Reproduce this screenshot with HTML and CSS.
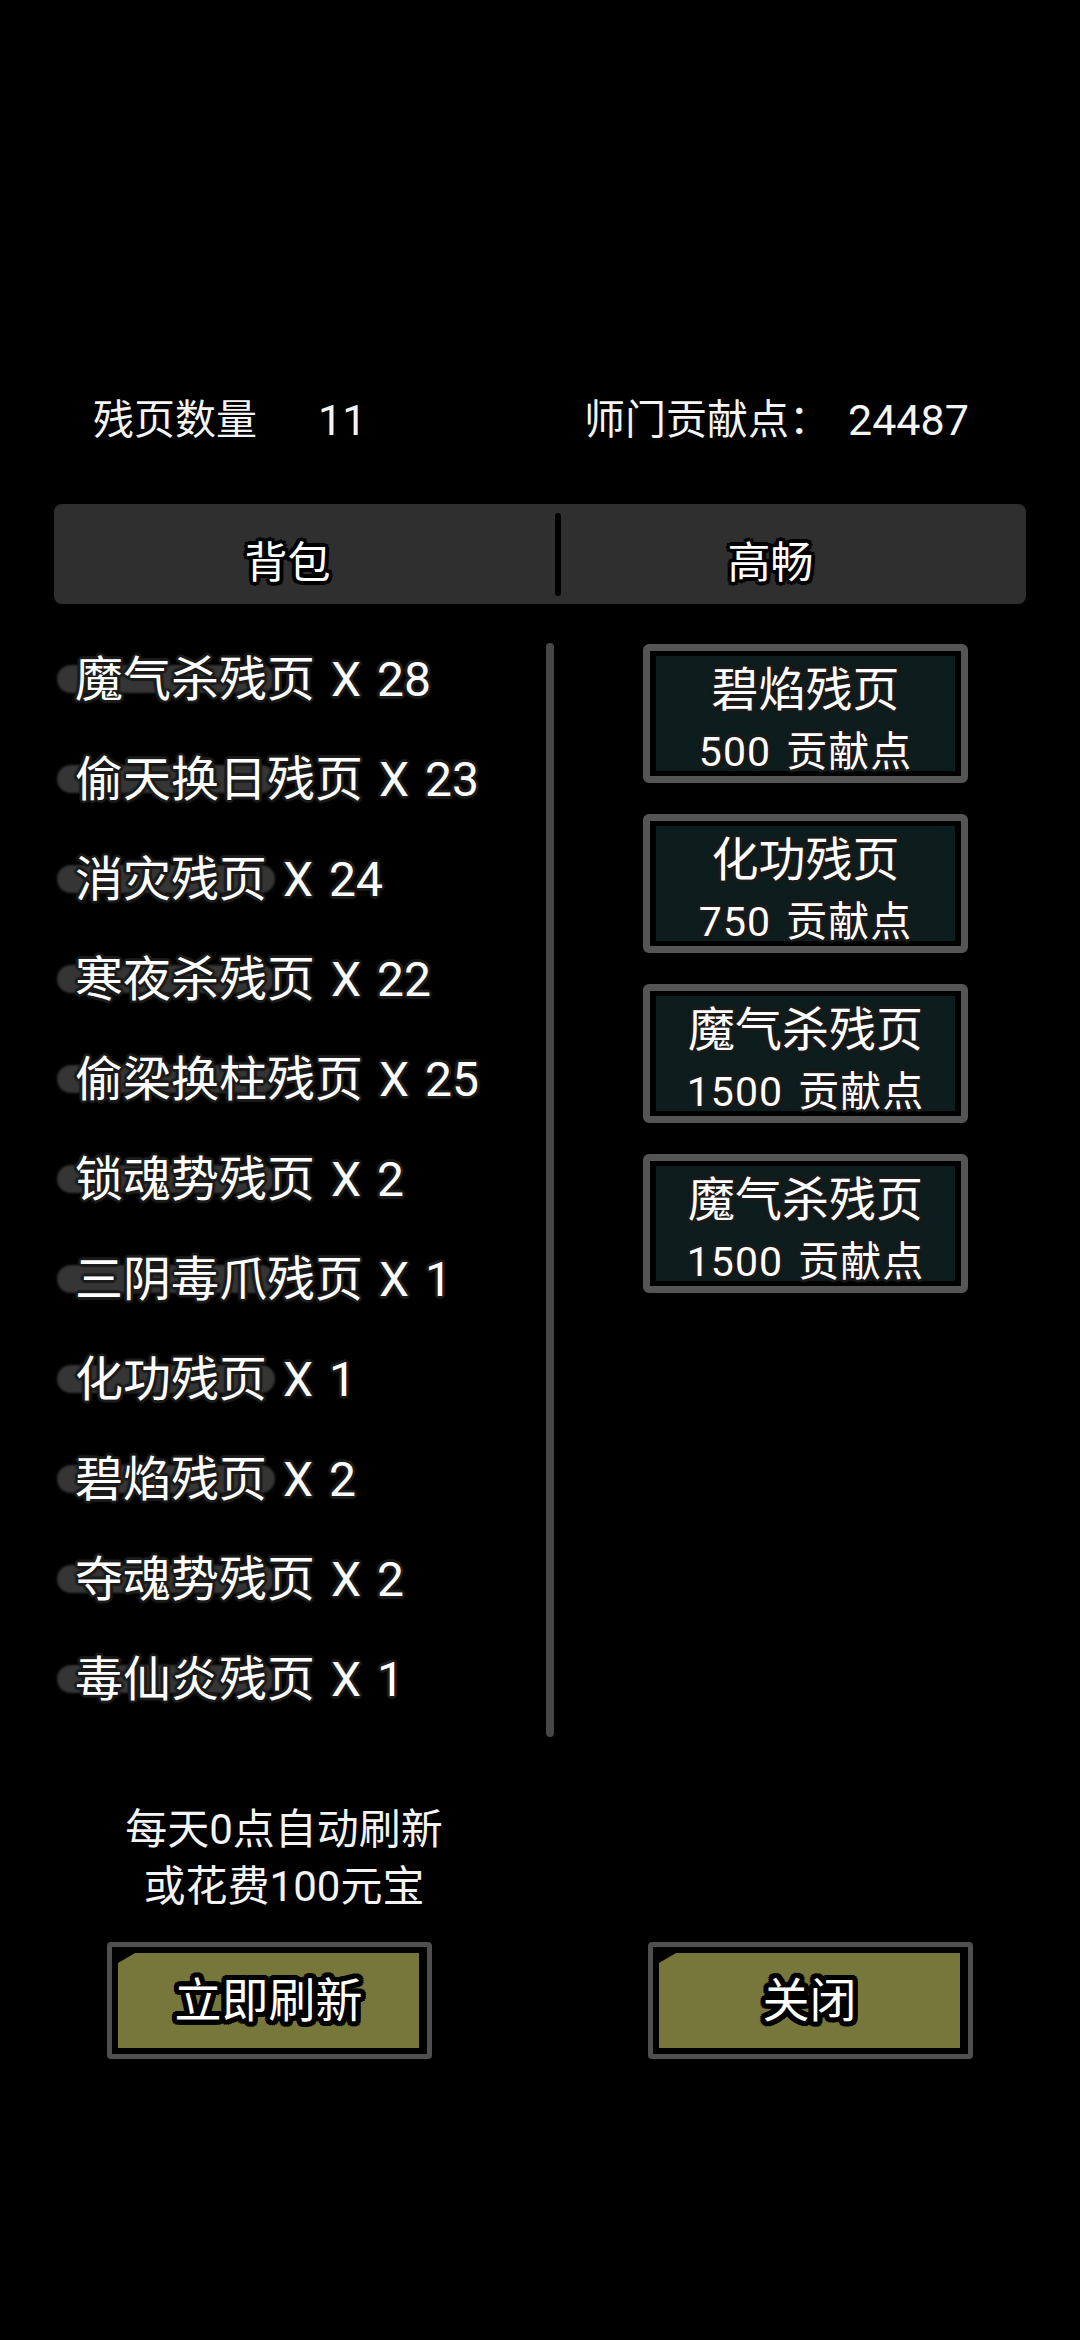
FILE: index.html
```html
<!DOCTYPE html>
<html lang="zh">
<head>
<meta charset="utf-8">
<title>残页兑换</title>
<link rel="stylesheet" href="styles.css">
</head>
<body>
<div class="screen">
  <div class="stats">
    <span class="stat-label">残页数量</span>
    <span class="stat-value">11</span>
    <span class="stat-label">师门贡献点：</span>
    <span class="stat-value">24487</span>
  </div>

  <div class="tabs">
    <div class="tab tab-left"><span class="outlined">背包</span></div>
    <div class="tab-divider"></div>
    <div class="tab tab-right"><span class="outlined">高畅</span></div>
  </div>

  <div class="content">
    <ul class="list">
      <li class="item"><span class="item-text">魔气杀残页 X 28</span></li>
      <li class="item"><span class="item-text">偷天换日残页 X 23</span></li>
      <li class="item"><span class="item-text">消灾残页 X 24</span></li>
      <li class="item"><span class="item-text">寒夜杀残页 X 22</span></li>
      <li class="item"><span class="item-text">偷梁换柱残页 X 25</span></li>
      <li class="item"><span class="item-text">锁魂势残页 X 2</span></li>
      <li class="item"><span class="item-text">三阴毒爪残页 X 1</span></li>
      <li class="item"><span class="item-text">化功残页 X 1</span></li>
      <li class="item"><span class="item-text">碧焰残页 X 2</span></li>
      <li class="item"><span class="item-text">夺魂势残页 X 2</span></li>
      <li class="item"><span class="item-text">毒仙炎残页 X 1</span></li>
    </ul>
    <div class="scrollbar"></div>
    <div class="shop">
      <div class="card">
        <div class="card-inner">
          <div class="card-title">碧焰残页</div>
          <div class="card-sub">500 贡献点</div>
        </div>
      </div>
      <div class="card">
        <div class="card-inner">
          <div class="card-title">化功残页</div>
          <div class="card-sub">750 贡献点</div>
        </div>
      </div>
      <div class="card">
        <div class="card-inner">
          <div class="card-title">魔气杀残页</div>
          <div class="card-sub">1500 贡献点</div>
        </div>
      </div>
      <div class="card">
        <div class="card-inner">
          <div class="card-title">魔气杀残页</div>
          <div class="card-sub">1500 贡献点</div>
        </div>
      </div>
    </div>
  </div>

  <div class="note">每天0点自动刷新<br>或花费100元宝</div>

  <div class="buttons">
    <div class="btn btn-refresh"><div class="btn-inner"><span class="btn-text">立即刷新</span></div></div>
    <div class="btn btn-close"><div class="btn-inner"><span class="btn-text">关闭</span></div></div>
  </div>
</div>
</body>
</html>
```

FILE: styles.css
```css
* {
  box-sizing: border-box;
}

html, body {
  margin: 0;
  padding: 0;
  background: #000;
}

body {
  font-family: Roboto, "Noto Sans CJK SC", sans-serif;
  color: #fff;
}

.screen {
  width: 1080px;
  height: 2340px;
  background: #000;
  overflow: hidden;
}

/* stats row */
.stats {
  display: grid;
  grid-template-columns: 225px 266px 264px auto;
  align-items: center;
  padding-left: 93px;
  margin-top: 395px;
  font-size: 41px;
  line-height: 50px;
  color: #f4f4f4;
}

.stat-value {
  font-size: 43px;
}

/* tabs */
.tabs {
  display: flex;
  align-items: center;
  margin: 59px 54px 0;
  height: 100px;
  background: #2f2f2f;
  border-radius: 8px;
}

.tab {
  display: flex;
  justify-content: center;
  align-items: center;
  height: 100%;
  font-size: 43px;
  padding-top: 10px;
}

.tab-left {
  width: 501px;
  padding-right: 34px;
}

.tab-right {
  flex: 1;
  padding-right: 46px;
}

.tab-divider {
  width: 6px;
  height: 83px;
  background: #000;
  border-radius: 3px;
}

.outlined {
  text-shadow:
    -3px -3px 0 #000, 3px -3px 0 #000, -3px 3px 0 #000, 3px 3px 0 #000,
    0 -4px 0 #000, 0 4px 0 #000, -4px 0 0 #000, 4px 0 0 #000;
}

/* content */
.content {
  display: flex;
  align-items: flex-start;
  margin-top: 26px;
  padding-left: 57px;
}

.list {
  list-style: none;
  margin: 0;
  padding: 0;
  width: 489px;
}

.item {
  position: relative;
  height: 100px;
  display: flex;
  align-items: center;
  padding-left: 18px;
  font-size: 48px;
  line-height: 100px;
  white-space: nowrap;
}

.item::before {
  content: "";
  position: absolute;
  left: 0;
  top: 35px;
  width: 218px;
  height: 28px;
  border-radius: 14px;
  background: #353535;
  filter: blur(1px);
}

.item-text {
  position: relative;
  word-spacing: 4px;
  text-shadow:
    -2px -2px 1px #1c1c1c, 2px -2px 1px #1c1c1c, -2px 2px 1px #1c1c1c, 2px 2px 1px #1c1c1c,
    0 -3px 1px #1c1c1c, 0 3px 1px #1c1c1c, -3px 0 1px #1c1c1c, 3px 0 1px #1c1c1c;
}

.scrollbar {
  width: 8px;
  height: 1094px;
  margin-top: 13px;
  background: #474747;
  border-radius: 4px;
}

.shop {
  display: flex;
  flex-direction: column;
  gap: 31px;
  margin-left: 89px;
  padding-top: 14px;
}

.card {
  width: 325px;
  height: 139px;
  border: 7px solid #555;
  border-radius: 6px;
  background: #000;
  padding: 5px 6px;
}

.card-inner {
  height: 115px;
  background: #0d1c1c;
  text-align: center;
  color: #fff;
  text-shadow:
    -2px -2px 1px #1c1c1c, 2px -2px 1px #1c1c1c, -2px 2px 1px #1c1c1c, 2px 2px 1px #1c1c1c,
    0 -3px 1px #1c1c1c, 0 3px 1px #1c1c1c, -3px 0 1px #1c1c1c, 3px 0 1px #1c1c1c;
}

.card-title {
  font-size: 47px;
  line-height: 56px;
  padding-top: 6px;
  white-space: nowrap;
}

.card-sub {
  font-size: 41px;
  line-height: 40px;
  margin-top: 14px;
  word-spacing: 4px;
  letter-spacing: 1px;
  white-space: nowrap;
}

/* note */
.note {
  width: 568px;
  margin-top: 64px;
  text-align: center;
  font-size: 42px;
  line-height: 57px;
  color: #f4f4f4;
}

/* buttons */
.buttons {
  display: flex;
  gap: 216px;
  margin-top: 27px;
  padding-left: 107px;
}

.btn {
  width: 325px;
  height: 117px;
  border: 5px solid #4f4f4f;
  border-radius: 4px;
  background: #000;
  padding: 6px 8px 6px 6px;
}

.btn-inner {
  height: 100%;
  background: #77773b;
  clip-path: polygon(0 10px, 17px 0, 100% 0, 100% 100%, 0 100%);
  display: flex;
  align-items: center;
  justify-content: center;
}

.btn-text {
  font-size: 47px;
  line-height: 60px;
  color: #fff;
  text-shadow:
    -4px -4px 0 #000, 4px -4px 0 #000, -4px 4px 0 #000, 4px 4px 0 #000,
    0 -5px 0 #000, 0 5px 0 #000, -5px 0 0 #000, 5px 0 0 #000,
    -2px -5px 0 #000, 2px -5px 0 #000, -2px 5px 0 #000, 2px 5px 0 #000,
    -5px -2px 0 #000, 5px -2px 0 #000, -5px 2px 0 #000, 5px 2px 0 #000;
}
```
